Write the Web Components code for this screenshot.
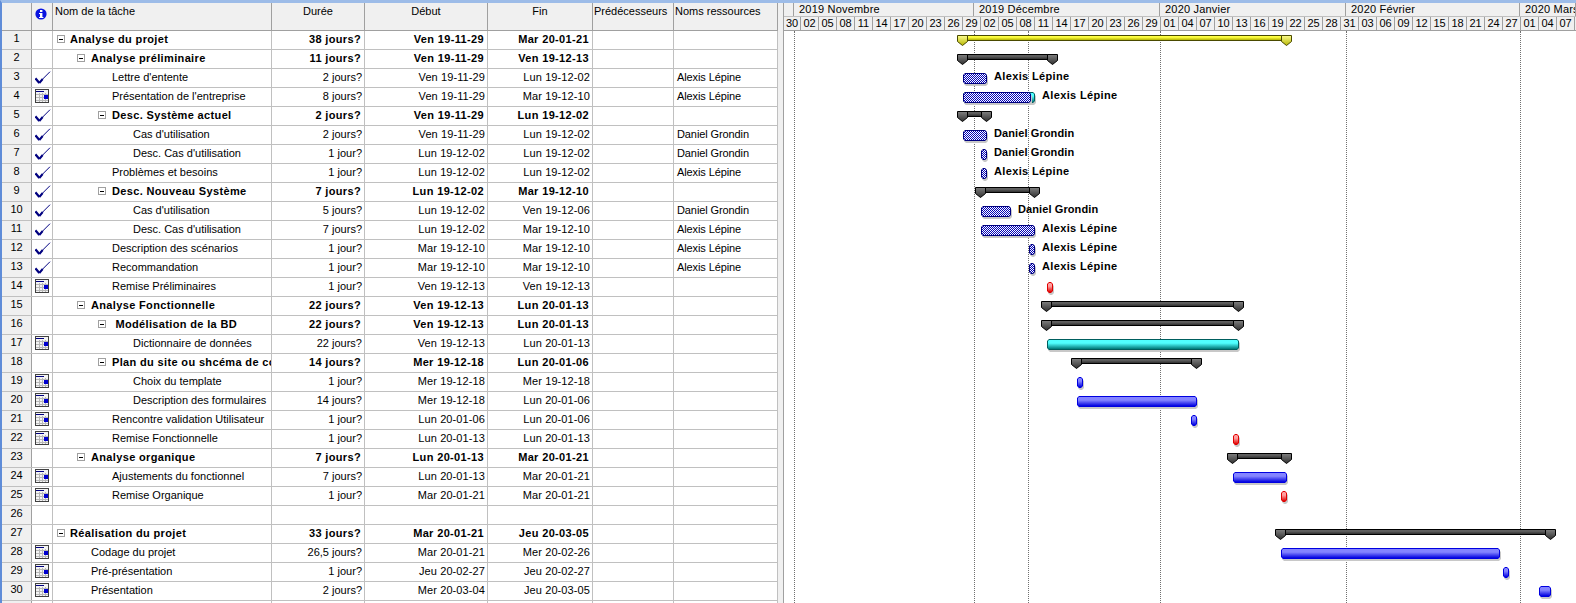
<!DOCTYPE html>
<html lang="fr">
<head>
<meta charset="utf-8">
<title>Planification du projet</title>
<style>
    html, body { margin: 0; height: 603px; overflow: hidden; background: #fff; }
</style>
</head>
<body>
<gantt-app></gantt-app>
<script>
//colonnes de la table, partagees par l'entete et les lignes
const COLS = '30px 21px 219px 93px 123px 105px 81px 104px';
const ROW_H = 19;

//check et calendrier de la colonne indicateurs
const ICONS = {
    check: `<svg class="chk" width="16" height="14" viewBox="0 0 16 14"><path d="M0.4 7.3 L4.3 12" stroke="#000080" stroke-width="2.2" fill="none"/><path d="M4.3 12 L7.7 8" stroke="#000080" stroke-width="2" fill="none"/><path d="M7.2 8.5 L15 0.7" stroke="#000080" stroke-width="1" fill="none"/></svg>`,
    cal: `<svg class="cal" width="14" height="14" viewBox="0 0 14 14" shape-rendering="crispEdges"><rect x="0.5" y="0.5" width="13" height="13" fill="#f4f4f4" stroke="#404040"/><rect x="1" y="2" width="8" height="1" fill="#000080"/><path d="M1 5.5H13M1 8.5H13M1 11.5H13M4.5 4V13M7.5 4V13M10.5 4V13" stroke="#b8b8b8" fill="none"/><rect x="9" y="6" width="4" height="4" fill="#0000d0"/></svg>`
};

class TaskHeader extends HTMLElement {
    constructor() {
        super();
        this._root = this.attachShadow({ mode: 'open' });
    }
    connectedCallback() {
        const titres = [
            ['', ''], ['', 'ic'], ['Nom de la tâche', 'l'], ['Durée', 'c'], ['Début', 'c'],
            ['Fin', 'c'], ['Prédécesseurs', 'l2'], ['Noms ressources', 'l2']
        ];
        this._root.innerHTML = `
        <style>
            :host { display: grid; grid-template-columns: ${COLS}; height: 27px; background: #f0f0f0; border-bottom: 1px solid #a0a0a0; box-sizing: content-box; }
            div { border-right: 1px solid #a0a0a0; box-sizing: border-box; line-height: 15px; padding-top: 1px; white-space: nowrap; overflow: hidden; }
            .l { padding-left: 2px; }
            .l2 { padding-left: 1px; }
            .c { text-align: center; }
            .ic { padding: 5px 0 0 3px; }
            svg { display: block; }
        </style>
        ${titres.map(([t, c]) => `<div class="${c}">${c === 'ic'
            ? `<svg width="12" height="12" viewBox="0 0 12 12"><circle cx="6" cy="6" r="5.6" fill="#0a14e0"/><rect x="5" y="2" width="2.4" height="2" fill="#fff"/><path d="M4 5H7.4V9H8.4V10H4V9H5V6H4Z" fill="#fff"/></svg>`
            : t}</div>`).join('')}
    `;
    }
}
window.customElements.define('task-header', TaskHeader);

class TaskRow extends HTMLElement {
    constructor() {
        super();
        this._root = this.attachShadow({ mode: 'open' });
    }
    connectedCallback() {
        const a = (n) => this.getAttribute(n) || '';
        const bold = this.hasAttribute('bold');
        const box = this.hasAttribute('box');
        this._root.innerHTML = `
        <style>
            :host { display: grid; grid-template-columns: ${COLS}; height: ${ROW_H}px; box-sizing: border-box; border-bottom: 1px solid #c0c0c0; line-height: 16px; font-weight: ${bold ? 'bold' : 'normal'}; letter-spacing: ${bold ? '0.35px' : '0'}; }
            .c { border-right: 1px solid #c0c0c0; box-sizing: border-box; white-space: pre; overflow: hidden; min-width: 0; }
            .id { background: #f0f0f0; text-align: center; font-weight: normal; line-height: 15px; letter-spacing: 0; border-right-color: #a0a0a0; }
            .ind svg { display: block; margin-left: 3px; }
            .ind .chk { margin-top: 2px; }
            .ind .cal { margin-top: 1px; }
            .name { display: flex; align-items: flex-start; padding-left: ${a('indent')}px; }
            .box { flex: none; width: 8px; height: 8px; box-sizing: border-box; border: 1px solid #a0a0a0; background: #fff; margin: 4px ${a('gap') || 6}px 0 0; }
            .box i { display: block; width: 4px; height: 1px; background: #000; margin: 2.5px 1px 0; }
            .r { text-align: right; padding-right: ${bold ? 3 : 2}px; }
            .date { letter-spacing: ${bold ? '0.35px' : '0.1px'}; }
            .res { padding-left: 3px; letter-spacing: -0.1px; font-weight: normal; }
        </style>
        <div class="c id">${a('num')}</div>
        <div class="c ind">${ICONS[a('icon')] || ''}</div>
        <div class="c name">${box ? '<span class="box"><i></i></span>' : ''}<slot></slot></div>
        <div class="c r">${a('duree')}</div>
        <div class="c r date">${a('debut')}</div>
        <div class="c r date">${a('fin')}</div>
        <div class="c"></div>
        <div class="c res">${a('res')}</div>
    `;
    }
}
window.customElements.define('task-row', TaskRow);

class TimeScale extends HTMLElement {
    constructor() {
        super();
        this._root = this.attachShadow({ mode: 'open' });
    }
    connectedCallback() {
        const mois = [[10, ''], [180, '2019 Novembre'], [186, '2019 Décembre'], [186, '2020 Janvier'], [174, '2020 Février'], [56, '2020 Mars']];
        const jours = ('30 02 05 08 11 14 17 20 23 26 29 02 05 08 11 14 17 20 23 26 29 '
            + '01 04 07 10 13 16 19 22 25 28 31 03 06 09 12 15 18 21 24 27 01 04 07').split(' ');
        this._root.innerHTML = `
        <style>
            :host { display: block; height: 27px; background: #f0f0f0; border-bottom: 1px solid #a0a0a0; overflow: hidden; }
            .ligne { display: flex; white-space: nowrap; }
            .haut { height: 14px; border-bottom: 1px solid #c0c0c0; box-sizing: border-box; }
            .bas { height: 13px; }
            .m { flex: none; box-sizing: border-box; border-right: 1px solid #a0a0a0; padding-left: 5px; line-height: 12px; overflow: hidden; letter-spacing: 0.2px; }
            .j { flex: none; width: 18px; box-sizing: border-box; border-right: 1px solid #a0a0a0; text-align: center; line-height: 13px; }
            .j:first-child { width: 17px; }
        </style>
        <div class="ligne haut">${mois.map(([w, t]) => `<div class="m" style="width:${w}px">${t}</div>`).join('')}</div>
        <div class="ligne bas">${jours.map((j) => `<div class="j">${j}</div>`).join('')}</div>
    `;
    }
}
window.customElements.define('time-scale', TimeScale);

//une barre du diagramme : x et w en pixels de la page, row commence a 1
class GanttBar extends HTMLElement {
    constructor() {
        super();
        this._root = this.attachShadow({ mode: 'open' });
    }
    connectedCallback() {
        const type = this.getAttribute('type');
        const x = +this.getAttribute('x') - 784;
        const w = +this.getAttribute('w');
        const row = +this.getAttribute('row');
        const pal = {
            tache: ['#0000e0', '#8484ff', '#0000e0'],
            crit: ['#005f5f', '#50ffff', '#007878'],
            jalon: ['#e00000', '#ffa0a0', '#e00000'],
            fait: ['#000080', '#fff', '#0000b8']
        }[type];
        if (type === 'resume' || type === 'projet') {
            const c = type === 'projet'
                ? { o: '#4a4a00', h: '#ffff90', b: '#b4b400', bh: '#ffff40' }
                : { o: '#000', h: '#808080', b: '#303030', bh: '#606060' };
            const cap = `<defs><linearGradient id="g" x1="0" y1="0" x2="0" y2="1"><stop offset="0" stop-color="${c.h}"/><stop offset="1" stop-color="${c.b}"/></linearGradient></defs><polygon points="0.5,0.5 10.5,0.5 10.5,6.5 5.5,10.5 0.5,6.5" fill="url(#g)" stroke="${c.o}" stroke-width="1"/>`;
            this._root.innerHTML = `
            <style>
                :host { position: absolute; display: block; left: ${x}px; top: ${(row - 1) * ROW_H + 4}px; width: ${w}px; height: 11px; }
                .b { position: absolute; left: 5px; right: 5px; top: 0; height: 6px; box-sizing: border-box; border: 1px solid ${c.o}; background: linear-gradient(${c.bh} 30%, ${c.b}); }
                svg { position: absolute; top: 0; display: block; }
                .g { left: 0; } .d { right: 0; }
            </style>
            <div class="b"></div>
            <svg class="g" width="11" height="11" viewBox="0 0 11 11">${cap}</svg>
            <svg class="d" width="11" height="11" viewBox="0 0 11 11">${cap}</svg>
        `;
            return;
        }
        const fond = type === 'fait'
            ? `repeating-conic-gradient(${pal[2]} 0 25%, #fff 0 50%) 0 0 / 2px 2px`
            : `linear-gradient(${pal[1]} 35%, ${pal[2]} 100%)`;
        const coupe = 'polygon(2px 0, calc(100% - 2px) 0, 100% 2px, 100% calc(100% - 2px), calc(100% - 2px) 100%, 2px 100%, 0 calc(100% - 2px), 0 2px)';
        this._root.innerHTML = `
        <style>
            :host { position: absolute; display: block; left: ${x}px; top: ${(row - 1) * ROW_H + 4}px; width: ${w}px; height: 11px; }
            .ombre, .bord, .fond { position: absolute; }
            .ombre { left: 1px; right: -1px; top: 2px; height: 11px; background: #c8c8c8; clip-path: ${coupe}; }
            .bord { inset: 0; background: ${pal[0]}; clip-path: ${coupe}; }
            .fond { inset: 1px; background: ${fond}; clip-path: polygon(1px 0, calc(100% - 1px) 0, 100% 1px, 100% calc(100% - 1px), calc(100% - 1px) 100%, 1px 100%, 0 calc(100% - 1px), 0 1px); }
        </style>
        <div class="ombre"></div>
        <div class="bord"></div>
        <div class="fond"></div>
    `;
    }
}
window.customElements.define('gantt-bar', GanttBar);

class GanttLabel extends HTMLElement {
    constructor() {
        super();
        this._root = this.attachShadow({ mode: 'open' });
    }
    connectedCallback() {
        const x = +this.getAttribute('x') - 784;
        const row = +this.getAttribute('row');
        const ls = this.textContent === D ? '0.1px' : '0.35px';
        this._root.innerHTML = `
        <style>
            :host { position: absolute; display: block; left: ${x}px; top: ${(row - 1) * ROW_H}px; height: ${ROW_H}px; line-height: 15px; font-weight: bold; letter-spacing: ${ls}; white-space: nowrap; }
        </style>
        <slot></slot>
    `;
    }
}
window.customElements.define('gantt-label', GanttLabel);

class GanttChart extends HTMLElement {
    constructor() {
        super();
        this._root = this.attachShadow({ mode: 'open' });
    }
    connectedCallback() {
        //lignes pointillees : changements de mois et date d'etat
        const lignes = [794, 974, 1028, 1160, 1346, 1520];
        this._root.innerHTML = `
        <style>
            :host { display: block; position: relative; height: 572px; background: #fff; overflow: hidden; }
            .v { position: absolute; top: 0; bottom: 0; width: 0; border-left: 1px dotted #707070; }
        </style>
        ${lignes.map((x) => `<div class="v" style="left:${x - 784}px"></div>`).join('')}
        <slot></slot>
    `;
    }
}
window.customElements.define('gantt-chart', GanttChart);

const A = 'Alexis Lépine', D = 'Daniel Grondin';
const TACHES = [
    { n: 'Analyse du projet', b: 1, i: 4, gap: 5, box: 1, du: '38 jours?', de: 'Ven 19-11-29', f: 'Mar 20-01-21' },
    { n: 'Analyse préliminaire', b: 1, i: 24, box: 1, du: '11 jours?', de: 'Ven 19-11-29', f: 'Ven 19-12-13' },
    { n: "Lettre d'entente", i: 59, ic: 'check', du: '2 jours?', de: 'Ven 19-11-29', f: 'Lun 19-12-02', r: A },
    { n: "Présentation de l'entreprise", i: 59, ic: 'cal', du: '8 jours?', de: 'Ven 19-11-29', f: 'Mar 19-12-10', r: A },
    { n: 'Desc. Système actuel', b: 1, i: 45, box: 1, ic: 'check', du: '2 jours?', de: 'Ven 19-11-29', f: 'Lun 19-12-02' },
    { n: "Cas d'utilisation", i: 80, ic: 'check', du: '2 jours?', de: 'Ven 19-11-29', f: 'Lun 19-12-02', r: D },
    { n: "Desc. Cas d'utilisation", i: 80, ic: 'check', du: '1 jour?', de: 'Lun 19-12-02', f: 'Lun 19-12-02', r: D },
    { n: 'Problèmes et besoins', i: 59, ic: 'check', du: '1 jour?', de: 'Lun 19-12-02', f: 'Lun 19-12-02', r: A },
    { n: 'Desc. Nouveau Système', b: 1, i: 45, box: 1, ic: 'check', du: '7 jours?', de: 'Lun 19-12-02', f: 'Mar 19-12-10' },
    { n: "Cas d'utilisation", i: 80, ic: 'check', du: '5 jours?', de: 'Lun 19-12-02', f: 'Ven 19-12-06', r: D },
    { n: "Desc. Cas d'utilisation", i: 80, ic: 'check', du: '7 jours?', de: 'Lun 19-12-02', f: 'Mar 19-12-10', r: A },
    { n: 'Description des scénarios', i: 59, ic: 'check', du: '1 jour?', de: 'Mar 19-12-10', f: 'Mar 19-12-10', r: A },
    { n: 'Recommandation', i: 59, ic: 'check', du: '1 jour?', de: 'Mar 19-12-10', f: 'Mar 19-12-10', r: A },
    { n: 'Remise Préliminaires', i: 59, ic: 'cal', du: '1 jour?', de: 'Ven 19-12-13', f: 'Ven 19-12-13' },
    { n: 'Analyse Fonctionnelle', b: 1, i: 24, box: 1, du: '22 jours?', de: 'Ven 19-12-13', f: 'Lun 20-01-13' },
    { n: ' Modélisation de la BD', b: 1, i: 45, box: 1, du: '22 jours?', de: 'Ven 19-12-13', f: 'Lun 20-01-13' },
    { n: 'Dictionnaire de données', i: 80, ic: 'cal', du: '22 jours?', de: 'Ven 19-12-13', f: 'Lun 20-01-13' },
    { n: 'Plan du site ou shcéma de contenu', b: 1, i: 45, box: 1, du: '14 jours?', de: 'Mer 19-12-18', f: 'Lun 20-01-06' },
    { n: 'Choix du template', i: 80, ic: 'cal', du: '1 jour?', de: 'Mer 19-12-18', f: 'Mer 19-12-18' },
    { n: 'Description des formulaires', i: 80, ic: 'cal', du: '14 jours?', de: 'Mer 19-12-18', f: 'Lun 20-01-06' },
    { n: 'Rencontre validation Utilisateur', i: 59, ic: 'cal', du: '1 jour?', de: 'Lun 20-01-06', f: 'Lun 20-01-06' },
    { n: 'Remise Fonctionnelle', i: 59, ic: 'cal', du: '1 jour?', de: 'Lun 20-01-13', f: 'Lun 20-01-13' },
    { n: 'Analyse organique', b: 1, i: 24, box: 1, du: '7 jours?', de: 'Lun 20-01-13', f: 'Mar 20-01-21' },
    { n: 'Ajustements du fonctionnel', i: 59, ic: 'cal', du: '7 jours?', de: 'Lun 20-01-13', f: 'Mar 20-01-21' },
    { n: 'Remise Organique', i: 59, ic: 'cal', du: '1 jour?', de: 'Mar 20-01-21', f: 'Mar 20-01-21' },
    { n: '' },
    { n: 'Réalisation du projet', b: 1, i: 4, gap: 5, box: 1, du: '33 jours?', de: 'Mar 20-01-21', f: 'Jeu 20-03-05' },
    { n: 'Codage du projet', i: 38, ic: 'cal', du: '26,5 jours?', de: 'Mar 20-01-21', f: 'Mer 20-02-26' },
    { n: 'Pré-présentation', i: 38, ic: 'cal', du: '1 jour?', de: 'Jeu 20-02-27', f: 'Jeu 20-02-27' },
    { n: 'Présentation', i: 38, ic: 'cal', du: '2 jours?', de: 'Mer 20-03-04', f: 'Jeu 20-03-05' },
    { n: '' }
];
//row, type, debut, fin (pixels de la page)
const BARRES = [
    [1, 'projet', 957, 1292], [2, 'resume', 957, 1058], [3, 'fait', 963, 987],
    [4, 'crit', 963, 1035], [4, 'fait', 963, 1031], [5, 'resume', 957, 992],
    [6, 'fait', 963, 987], [7, 'fait', 981, 987], [8, 'fait', 981, 987],
    [9, 'resume', 975, 1040], [10, 'fait', 981, 1011], [11, 'fait', 981, 1035],
    [12, 'fait', 1029, 1035], [13, 'fait', 1029, 1035], [14, 'jalon', 1047, 1053],
    [15, 'resume', 1041, 1244], [16, 'resume', 1041, 1244], [17, 'crit', 1047, 1239],
    [18, 'resume', 1071, 1202], [19, 'tache', 1077, 1083], [20, 'tache', 1077, 1197],
    [21, 'tache', 1191, 1197], [22, 'jalon', 1233, 1239], [23, 'resume', 1227, 1292],
    [24, 'tache', 1233, 1287], [25, 'jalon', 1281, 1287], [27, 'resume', 1275, 1556],
    [28, 'tache', 1281, 1500], [29, 'tache', 1503, 1509], [30, 'tache', 1539, 1551]
];
const ETIQUETTES = [
    [3, 994, A], [4, 1042, A], [6, 994, D], [7, 994, D], [8, 994, A],
    [10, 1018, D], [11, 1042, A], [12, 1042, A], [13, 1042, A]
];

class GanttApp extends HTMLElement {
    constructor() {
        super();
        this._root = this.attachShadow({ mode: 'open' });
    }
    connectedCallback() {
        this._root.innerHTML = `
        <style>
            :host { display: block; height: 603px; overflow: hidden; box-sizing: border-box; border-top: 3px solid #9dbce8; border-left: 2px solid #5f8cd8; background: #fff; color: #000; font: 11px/15px "Liberation Sans", Arial, sans-serif; }
            .corps { display: flex; height: 600px; }
            .table { flex: none; width: 776px; overflow: hidden; }
            .sep { flex: none; width: 5px; background: #f0f0f0; border-right: 1px solid #a0a0a0; }
            .gantt { flex: 1; min-width: 0; overflow: hidden; }
        </style>
        <div class="corps">
            <div class="table">
                <task-header></task-header>
                <div id="lignes"></div>
            </div>
            <div class="sep"></div>
            <div class="gantt">
                <time-scale></time-scale>
                <gantt-chart id="chart"></gantt-chart>
            </div>
        </div>
    `;
        const lignes = this._root.querySelector('#lignes');
        TACHES.forEach((t, i) => {
            const r = document.createElement('task-row');
            r.setAttribute('num', i < 30 ? i + 1 : '');
            r.setAttribute('indent', t.i || 0);
            if (t.gap) r.setAttribute('gap', t.gap);
            if (t.b) r.setAttribute('bold', '');
            if (t.box) r.setAttribute('box', '');
            if (t.ic) r.setAttribute('icon', t.ic);
            r.setAttribute('duree', t.du || '');
            r.setAttribute('debut', t.de || '');
            r.setAttribute('fin', t.f || '');
            r.setAttribute('res', t.r || '');
            r.textContent = t.n;
            lignes.appendChild(r);
        });
        const chart = this._root.querySelector('#chart');
        BARRES.forEach(([row, type, x1, x2]) => {
            const b = document.createElement('gantt-bar');
            b.setAttribute('row', row);
            b.setAttribute('type', type);
            b.setAttribute('x', x1);
            b.setAttribute('w', x2 - x1);
            chart.appendChild(b);
        });
        ETIQUETTES.forEach(([row, x, txt]) => {
            const l = document.createElement('gantt-label');
            l.setAttribute('row', row);
            l.setAttribute('x', x);
            l.textContent = txt;
            chart.appendChild(l);
        });
    }
}
window.customElements.define('gantt-app', GanttApp);
</script>
</body>
</html>
